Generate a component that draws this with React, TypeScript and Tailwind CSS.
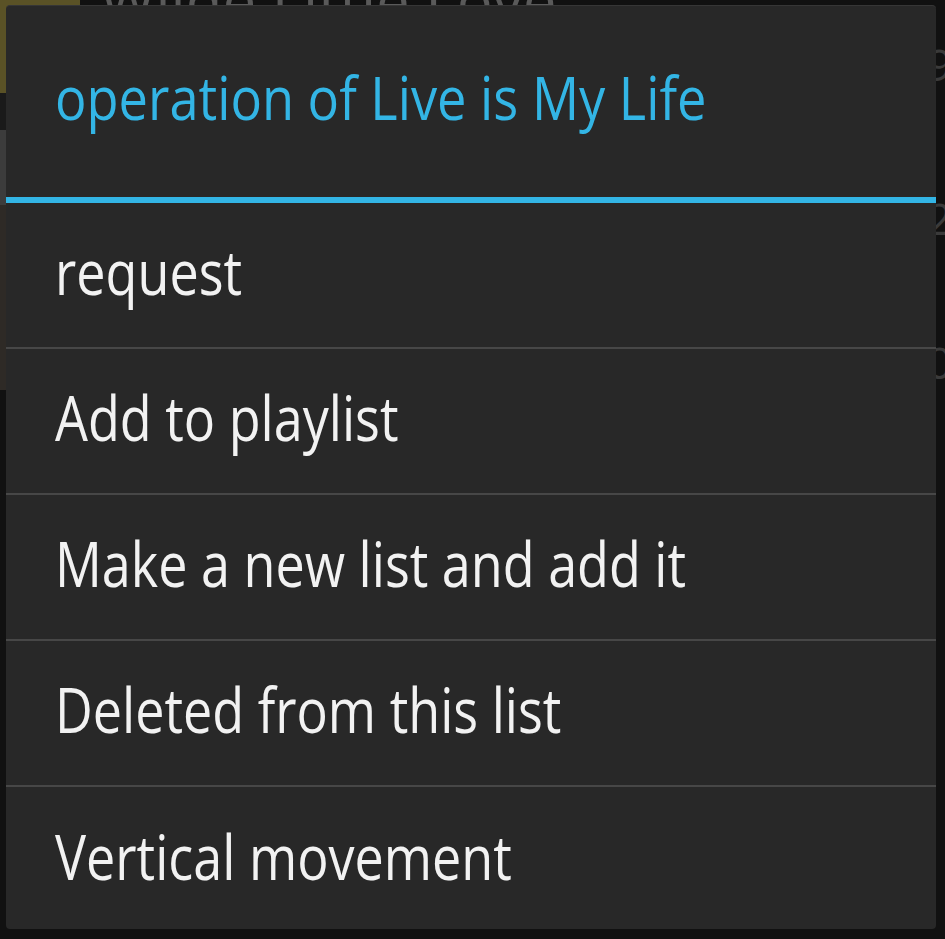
import React from "react";

const items = [
  "request",
  "Add to playlist",
  "Make a new list and add it",
  "Deleted from this list",
  "Vertical movement",
];

export default function App() {
  return (
    <div className="relative h-[939px] w-[945px] overflow-hidden bg-[#111111] font-['Open_Sans',sans-serif]">
      {/* dimmed list behind the dialog */}
      <div className="flex h-full">
        <div className="flex w-[80px] flex-col">
          <div className="h-[93px] bg-[#5a5226]" />
          <div className="h-[37px] bg-[#1a1a1a]" />
          <div className="h-[75px] bg-[#3c3c3c]" />
          <div className="h-[185px] bg-[#2e2a26]" />
        </div>
        <div className="flex flex-1 flex-col">
          <div className="-mt-[30px] pl-[20px] text-[60px] leading-none text-[#5a5a5a]">
            Wilde Little Love
          </div>
        </div>
      </div>
      <div className="absolute right-0 top-0 flex w-[20px] flex-col pl-[2px] text-[44px] leading-none text-[#3a3a3a]">
        <span className="mt-[42px]">9</span>
        <span className="mt-[110px]">2</span>
        <span className="mt-[100px]">0</span>
      </div>

      {/* dialog */}
      <div className="absolute left-[6px] top-[5px] flex h-[924px] w-[930px] flex-col overflow-hidden rounded-[4px] border-t border-[#363636] bg-[#282828]">
        <div className="flex h-[191px] shrink-0 items-center pb-[9px] pl-[49px]">
          <span className="inline-block origin-left scale-x-[0.873] whitespace-nowrap text-[60px] leading-none text-[#33b5e5]">
            operation of Live is My Life
          </span>
        </div>
        <div className="h-[6px] shrink-0 bg-[#33b5e5]" />
        {items.map((label, i) => (
          <div
            key={label}
            className={
              "flex h-[146px] shrink-0 items-center pb-[10px] pl-[49px] " +
              (i < items.length - 1 ? "border-b-2 border-[#474747]" : "")
            }
          >
            <span className="inline-block origin-left scale-x-[0.827] whitespace-nowrap text-[63px] leading-none text-[#f2f2f2]">
              {label}
            </span>
          </div>
        ))}
      </div>
    </div>
  );
}
